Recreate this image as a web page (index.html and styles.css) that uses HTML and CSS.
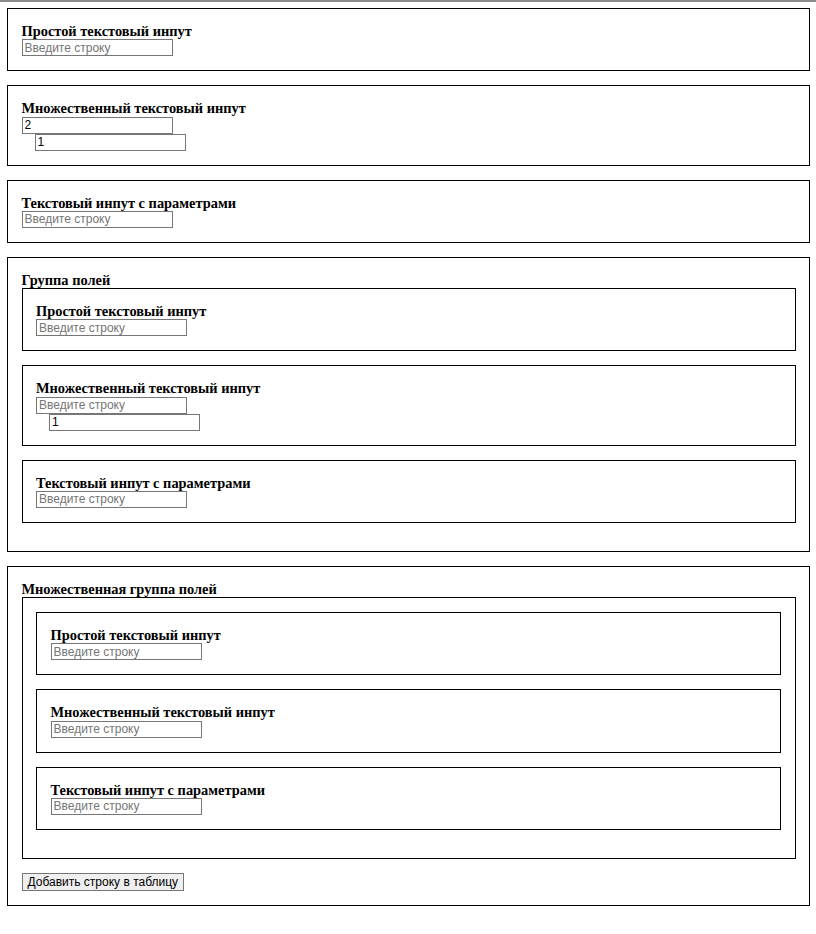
FILE: index.html
```html
<!DOCTYPE html>
<html lang="ru">
<head>
<meta charset="utf-8">
<link rel="stylesheet" href="styles.css">
</head>
<body>
<div class="topbar"></div>
<div class="page">
  <div class="box">
    <div class="title">Простой текстовый инпут</div>
    <input class="inp" type="text" placeholder="Введите строку">
  </div>

  <div class="box">
    <div class="title">Множественный текстовый инпут</div>
    <input class="inp" type="text" value="2">
    <input class="inp sub" type="text" value="1">
  </div>

  <div class="box">
    <div class="title">Текстовый инпут с параметрами</div>
    <input class="inp" type="text" placeholder="Введите строку">
  </div>

  <div class="box">
    <div class="title">Группа полей</div>
    <div class="box">
      <div class="title">Простой текстовый инпут</div>
      <input class="inp" type="text" placeholder="Введите строку">
    </div>
    <div class="box">
      <div class="title">Множественный текстовый инпут</div>
      <input class="inp" type="text" placeholder="Введите строку">
      <input class="inp sub" type="text" value="1">
    </div>
    <div class="box">
      <div class="title">Текстовый инпут с параметрами</div>
      <input class="inp" type="text" placeholder="Введите строку">
    </div>
  </div>

  <div class="box">
    <div class="title">Множественная группа полей</div>
    <div class="box">
      <div class="box">
        <div class="title">Простой текстовый инпут</div>
        <input class="inp" type="text" placeholder="Введите строку">
      </div>
      <div class="box">
        <div class="title">Множественный текстовый инпут</div>
        <input class="inp" type="text" placeholder="Введите строку">
      </div>
      <div class="box">
        <div class="title">Текстовый инпут с параметрами</div>
        <input class="inp" type="text" placeholder="Введите строку">
      </div>
    </div>
    <button class="btn" type="button">Добавить строку в таблицу</button>
  </div>
</div>
</body>
</html>
```

FILE: styles.css
```css
html, body {
  margin: 0;
  padding: 0;
  background: #fff;
}

body {
  font-family: "Liberation Serif", "Times New Roman", serif;
  color: #000;
}

.topbar {
  height: 2px;
  background: #8c8c8c;
}

.page {
  margin: 6px 6px 0 7px;
}

.box {
  border: 1px solid #000;
  padding: 14px 13.5px;
  margin-bottom: 14px;
}

.title {
  font-weight: bold;
  font-size: 14.4px;
  line-height: 16.25px;
}

.inp {
  display: block;
  box-sizing: border-box;
  width: 151px;
  height: 17px;
  margin: 0;
  padding: 0 2px;
  border: 1px solid #767676;
  font-family: "Liberation Sans", Arial, sans-serif;
  font-size: 12px;
  color: #000;
  background: #fff;
}

.inp::placeholder {
  color: #757575;
}

.inp.sub {
  margin-left: 13px;
}

.btn {
  display: block;
  box-sizing: border-box;
  height: 18px;
  margin: 0;
  padding: 0 5px;
  border: 1px solid #767676;
  background: #efefef;
  font-family: "Liberation Sans", Arial, sans-serif;
  font-size: 12px;
  line-height: 14px;
  color: #000;
}
```
